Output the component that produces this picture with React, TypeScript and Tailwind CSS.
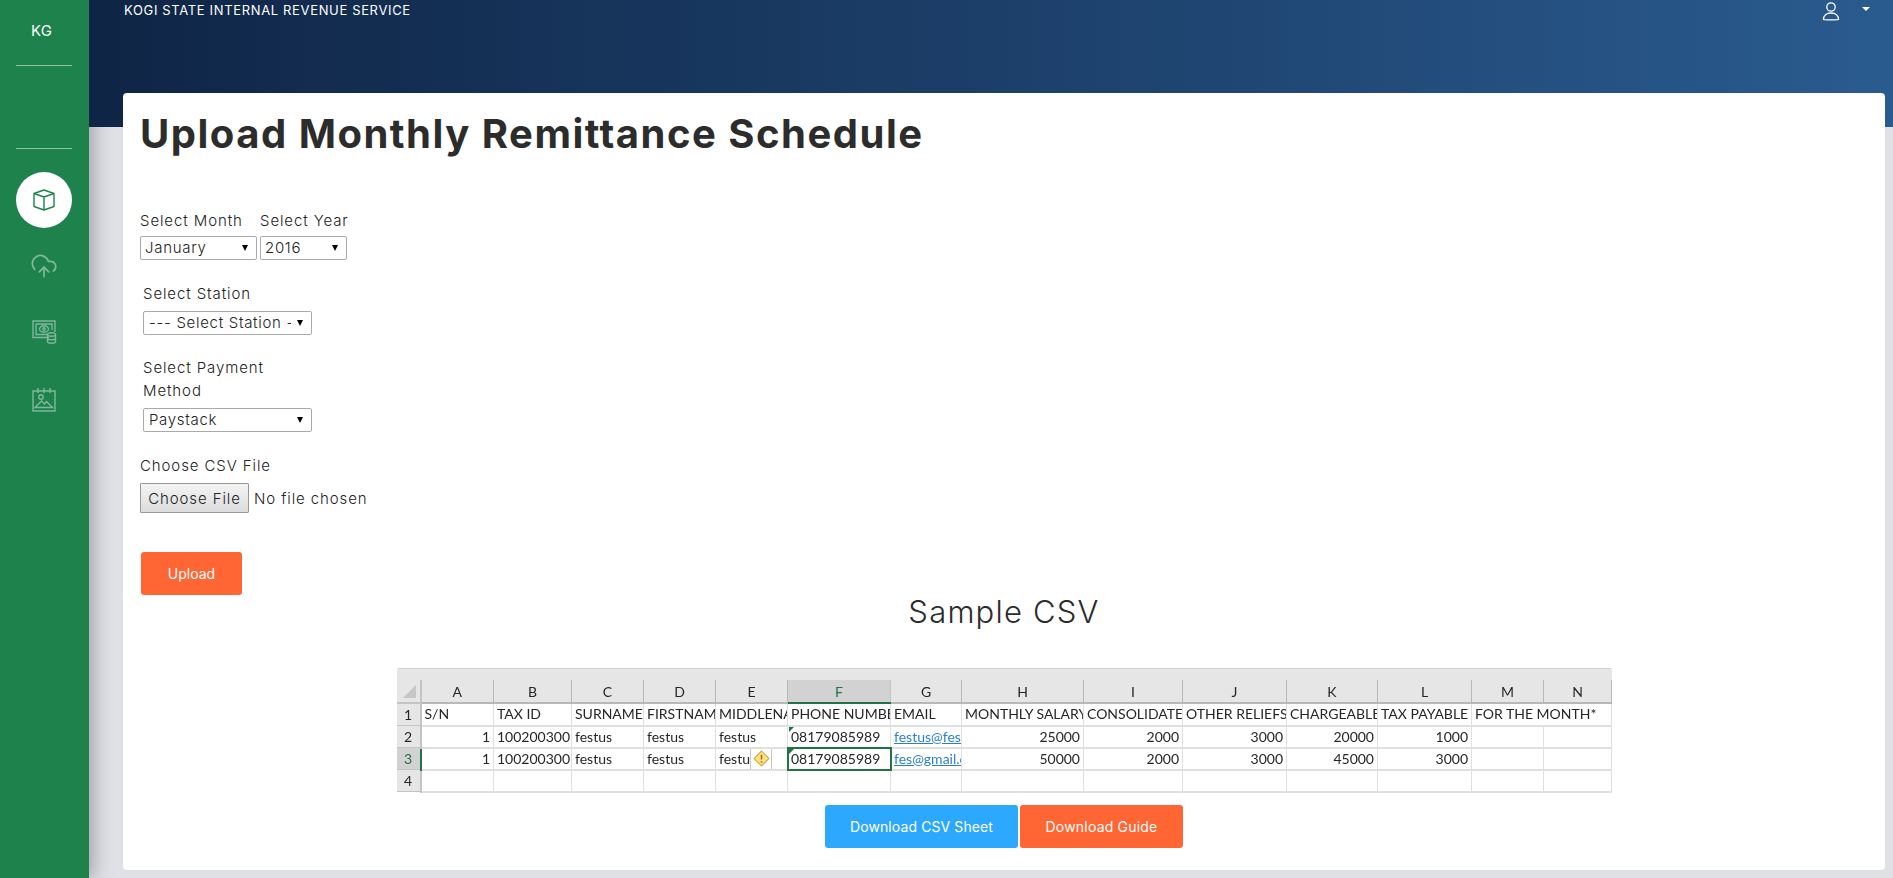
import { CloudUpload } from 'lucide-react';

const MONTHS = ['January', 'February', 'March', 'April', 'May', 'June', 'July', 'August', 'September', 'October', 'November', 'December'];
const YEARS = ['2016', '2017', '2018', '2019', '2020'];

const COLUMNS = [
  { name: 'A', width: 'w-[73px]' },
  { name: 'B', width: 'w-[78px]' },
  { name: 'C', width: 'w-[72px]' },
  { name: 'D', width: 'w-[72px]' },
  { name: 'E', width: 'w-[72px]' },
  { name: 'F', width: 'w-[103px]' },
  { name: 'G', width: 'w-[71px]' },
  { name: 'H', width: 'w-[122px]' },
  { name: 'I', width: 'w-[99px]' },
  { name: 'J', width: 'w-[104px]' },
  { name: 'K', width: 'w-[91px]' },
  { name: 'L', width: 'w-[94px]' },
  { name: 'M', width: 'w-[72px]' },
  { name: 'N', width: 'w-[68px]' },
];

const HEADINGS = ['S/N', 'TAX ID', 'SURNAME', 'FIRSTNAME', 'MIDDLENAME', 'PHONE NUMBER', 'EMAIL', 'MONTHLY SALARY', 'CONSOLIDATED', 'OTHER RELIEFS', 'CHARGEABLE', 'TAX PAYABLE'];

const ROWS = [
  { email: 'festus@festus.com', values: ['25000', '2000', '3000', '20000', '1000'] },
  { email: 'fes@gmail.com', values: ['50000', '2000', '3000', '45000', '3000'] },
];

const cell = 'h-[22px] overflow-hidden whitespace-nowrap border-r border-b-2 border-[#e0e0e0] pl-[3px] pr-[3px] leading-none';

function RowHead({ n, active }: { n: number; active?: boolean }) {
  return (
    <th className={`h-[22px] border-b border-r-2 border-[#c4c4c4] font-normal ${active ? 'bg-[#d2d2d2] text-[#217346] border-r-[#217346]' : 'bg-[#e6e6e6]'}`}>
      {n}
    </th>
  );
}

function Spreadsheet() {
  return (
    <div className="mt-[38px] w-[1215px] overflow-hidden rounded-t-[2px] border-t border-[#cfcfcf] blur-[0.35px]">
      <div className="h-[11px] bg-[#e6e6e6]" />
      <table className="w-[1215px] table-fixed border-collapse font-['Lato',sans-serif] text-[14px] text-[#262626]">
        <colgroup>
          <col className="w-[24px]" />
          {COLUMNS.map((c) => <col key={c.name} className={c.width} />)}
        </colgroup>
        <thead>
          <tr>
            <th className="relative h-[23px] border-b-2 border-r-2 border-[#c4c4c4] bg-[#e6e6e6]">
              <span className="absolute bottom-[4px] right-[4px] size-0 border-b-[13px] border-l-[13px] border-b-[#c6c6c6] border-l-transparent" />
            </th>
            {COLUMNS.map((c) => (
              <th
                key={c.name}
                className={`border-r border-b-2 font-normal ${c.name === 'F' ? 'border-b-[#217346] border-r-[#c4c4c4] bg-[#d2d2d2] text-[#217346]' : 'border-[#b8b8b8] bg-[#e6e6e6]'}`}
              >
                {c.name}
              </th>
            ))}
          </tr>
        </thead>
        <tbody>
          <tr>
            <RowHead n={1} />
            {HEADINGS.map((h) => <td key={h} className={cell}>{h}</td>)}
            <td colSpan={2} className={cell}>FOR THE MONTH*</td>
          </tr>
          {ROWS.map((row, i) => (
            <tr key={row.email}>
              <RowHead n={i + 2} active={i === 1} />
              <td className={`${cell} text-right`}>1</td>
              <td className={`${cell} text-right`}>100200300</td>
              <td className={cell}>festus</td>
              <td className={cell}>festus</td>
              <td className={`${cell} relative`}>
                festus
                {i === 1 && (
                  <span className="absolute -bottom-[1px] right-[15px] flex h-[23px] w-[22px] items-center justify-center border border-[#c6c6c6] bg-white">
                    <svg viewBox="0 0 16 16" className="size-[17px]">
                      <path d="M8 1 15 8 8 15 1 8Z" fill="#fbe58a" stroke="#d9a92c" />
                      <path d="M8 4.500v4.500M8 10.500v1.500" stroke="#b5651d" strokeWidth="1.500" />
                    </svg>
                  </span>
                )}
              </td>
              <td className={`${cell} relative ${i === 1 ? 'outline-2 -outline-offset-1 outline-[#217346]' : ''}`}>
                <span className="absolute left-[1px] top-0 size-0 border-t-[5px] border-r-[5px] border-t-[#217346] border-r-transparent" />
                08179085989
              </td>
              <td className={`${cell} text-[#2a7fd5] underline`}>{row.email}</td>
              {row.values.map((v, j) => <td key={j} className={`${cell} text-right`}>{v}</td>)}
              <td className={cell} />
              <td className={cell} />
            </tr>
          ))}
          <tr>
            <RowHead n={4} />
            {COLUMNS.map((c) => <td key={c.name} className={cell} />)}
          </tr>
        </tbody>
      </table>
    </div>
  );
}

function CubeIcon() {
  return (
    <svg viewBox="0 0 24 24" fill="none" stroke="currentColor" strokeWidth="1.400" strokeLinejoin="round" className="size-[24px]">
      <path d="M12 2 22 5.500V18.500L12 22 2 18.500V5.500Z" />
      <path d="M2 5.500 12 9l10-3.500M12 9v13" />
    </svg>
  );
}

function MoneyIcon() {
  return (
    <svg viewBox="0 0 26 26" fill="none" stroke="currentColor" strokeWidth="1.400" className="size-[26px]">
      <path d="M18 18.500H2V2h22v11" />
      <path d="M5 5h16v6M5 5v10.500h11" />
      <ellipse cx="13" cy="10" rx="4.500" ry="3.200" />
      <circle cx="13" cy="10" r="1.200" />
      <ellipse cx="20.500" cy="15.500" rx="4" ry="1.800" />
      <path d="M16.500 15.500v7c0 1 1.800 1.800 4 1.800s4-.8 4-1.800v-7M16.500 19c0 1 1.800 1.800 4 1.800s4-.8 4-1.800" />
    </svg>
  );
}

function PictureIcon() {
  return (
    <svg viewBox="0 0 26 26" fill="none" stroke="currentColor" strokeWidth="1.400" className="size-[26px]">
      <path d="M2 4h22v20H2z" />
      <path d="M7 1v5M13 1v5M19 1v5" />
      <circle cx="10" cy="10" r="2.200" />
      <path d="M4 20.500 10.500 14l3 3 2-2.500 6 6H4Z" />
    </svg>
  );
}

function SelectBox({ width, options, pad }: { width: string; options: string[]; pad: string }) {
  return (
    <div className={`relative ${width}`}>
      <select className={`block h-[24px] w-full appearance-none overflow-hidden rounded-[2px] border border-[#aaa] bg-white pr-[20px] text-[15px] font-light tracking-[0.7px] text-[#222] ${pad}`}>
        {options.map((o) => <option key={o}>{o}</option>)}
      </select>
      <span className="pointer-events-none absolute right-[9px] top-[9px] size-0 border-x-[3.5px] border-t-[6px] border-x-transparent border-t-black" />
    </div>
  );
}

export default function App() {
  const label = "text-[15px] font-light leading-[23px] tracking-[0.9px] text-[#222]";

  return (
    <div className="flex min-h-[878px] bg-[#e0e1e6] font-['Inter',sans-serif]">
      {/* Sidebar */}
      <aside className="z-10 flex w-[89px] shrink-0 flex-col items-center bg-[#1e824c] pr-[1px] shadow-[4px_0_18px_rgba(60,60,70,0.4)]">
        <div className="flex h-[66px] w-[56px] items-center justify-center border-b border-white/50 pb-[2px] pr-[5px] text-[15px] text-white">
          KG
        </div>
        <div className="h-[83px] w-[56px] border-b border-white/50" />
        <div className="mt-[23px] flex size-[56px] items-center justify-center rounded-full bg-white text-[#1e824c]">
          <CubeIcon />
        </div>
        <div className="mt-[24px] text-[#7fb89a]"><CloudUpload size={28} strokeWidth={1.5} /></div>
        <div className="mt-[39px] text-[#7fb89a]"><MoneyIcon /></div>
        <div className="mt-[42px] text-[#7fb89a]"><PictureIcon /></div>
      </aside>

      <div className="flex min-w-0 flex-1 flex-col">
        {/* Header */}
        <header className="z-20 flex h-[127px] items-start justify-between bg-gradient-to-r from-[#0f2546] to-[#2a5b8f] pl-[35px] pr-[23px] text-white">
          <span className="text-[13px] leading-[20px] tracking-[0.65px]">KOGI STATE INTERNAL REVENUE SERVICE</span>
          <div className="flex items-start gap-[22px]">
            <svg viewBox="0 0 18 20" fill="none" stroke="currentColor" strokeWidth="1.300" className="mt-[1px] h-[20px] w-[18px]">
              <circle cx="9" cy="6" r="4.200" />
              <path d="M1.500 18.500c0-4 3-6.500 7.500-6.500s7.500 2.500 7.500 6.500c-2 .6-13 .6-15 0Z" />
            </svg>
            <span className="mt-[7px] size-0 border-x-[4px] border-t-[4px] border-x-transparent border-t-white" />
          </div>
        </header>

        {/* Content */}
        <main className="z-30 mb-[8px] ml-[34px] mr-[8px] -mt-[34px] flex h-[777px] flex-col rounded-[4px] bg-white pl-[17px] pt-[18px]">
          <h1 className="text-[40px] font-bold leading-[46px] tracking-[1.5px] text-[#2c2c2c]">Upload Monthly Remittance Schedule</h1>

          <div className="mt-[52px] flex gap-[3px]">
            <label>
              <span className={`${label} block pb-[4px]`}>Select Month</span>
              <SelectBox width="w-[117px]" options={MONTHS} pad="pl-[4px]" />
            </label>
            <label>
              <span className={`${label} block pb-[4px]`}>Select Year</span>
              <SelectBox width="w-[87px]" options={YEARS} pad="pl-[4px]" />
            </label>
          </div>

          <label className="ml-[3px] mt-[22px] block w-[169px]">
            <span className={`${label} block pb-[6px]`}>Select Station</span>
            <SelectBox width="w-[169px]" options={['--- Select Station ---']} pad="pl-[5px]" />
          </label>

          <label className="ml-[3px] mt-[21px] block w-[169px]">
            <span className={`${label} block pb-[6px]`}>Select Payment Method</span>
            <SelectBox width="w-[169px]" options={['Paystack']} pad="pl-[5px]" />
          </label>

          <label className="mt-[22px] block">
            <span className={`${label} block pb-[6px]`}>Choose CSV File</span>
            <input
              type="file"
              className={`${label} block h-[30px] w-[300px] file:mr-[5px] file:h-[30px] file:w-[109px] file:rounded-[1px] file:border file:border-[#999] file:bg-gradient-to-b file:from-[#f4f4f4] file:to-[#dcdcdc] file:text-[15px] file:font-light file:tracking-[0.9px] file:text-[#222]`}
            />
          </label>

          <button className="ml-[1px] mt-[39px] h-[43px] w-[101px] rounded-[3px] bg-[#ff6633] text-[14px] text-white">Upload</button>

          <div className="-ml-[17px] flex flex-col items-center">
            <h2 className="mt-[-1px] text-[31px] font-light leading-[36px] tracking-[1.2px] text-[#2c2c2c]">Sample CSV</h2>
            <Spreadsheet />
            <div className="mt-[12px] flex gap-[2px]">
              <button className="h-[43px] w-[193px] rounded-[3px] bg-[#2ca8ff] text-[14px] tracking-[0.1px] text-white">Download CSV Sheet</button>
              <button className="h-[43px] w-[163px] rounded-[3px] bg-[#ff6633] text-[14px] tracking-[0.2px] text-white">Download Guide</button>
            </div>
          </div>
        </main>
      </div>
    </div>
  );
}
